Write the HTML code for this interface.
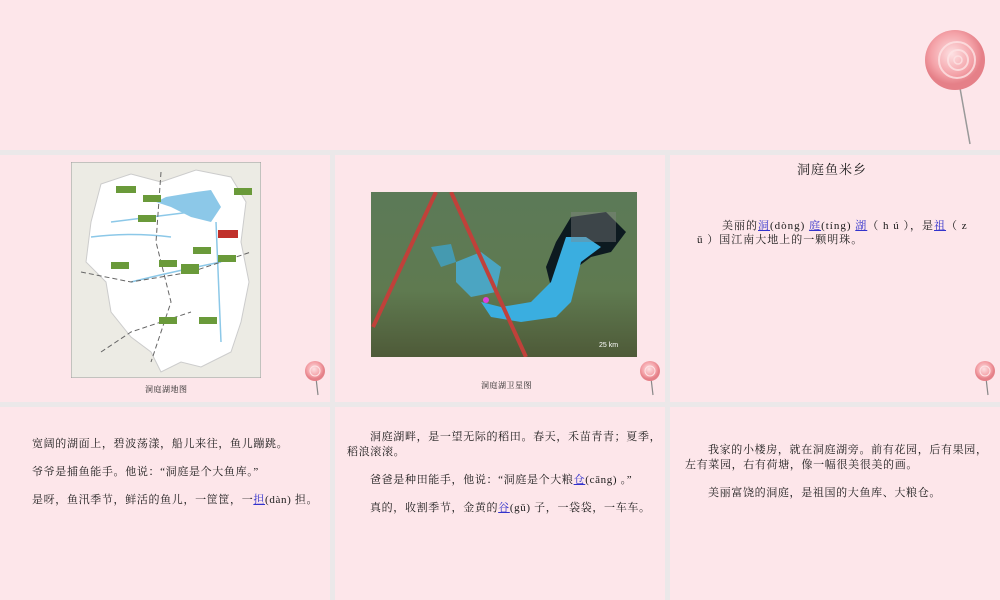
<!DOCTYPE html>
<html><head><meta charset="utf-8"><style>
*{margin:0;padding:0}
body{width:1000px;height:600px;background:#ebe8e9;position:relative;overflow:hidden;font-family:"Liberation Serif","Noto Serif CJK SC",serif;color:#1a1a1a}
.p{position:absolute;background:#fde6ea}
.t{position:absolute;white-space:nowrap;font-size:11px;letter-spacing:0.65px;line-height:14px}
a{color:#3333cc;text-decoration:underline}
.lp{position:absolute}
</style></head><body>
<div class="p" style="left:0;top:0;width:1000px;height:150px"></div>
<div class="p" style="left:0;top:155px;width:330px;height:247px"></div>
<div class="p" style="left:335px;top:155px;width:330px;height:247px"></div>
<div class="p" style="left:670px;top:155px;width:330px;height:247px"></div>
<div class="p" style="left:0;top:407px;width:330px;height:193px"></div>
<div class="p" style="left:335px;top:407px;width:330px;height:193px"></div>
<div class="p" style="left:670px;top:407px;width:330px;height:193px"></div>

<svg class="lp" style="left:915px;top:20px" width="80" height="130">
<defs><radialGradient id="g" cx="45%" cy="40%"><stop offset="0" stop-color="#fde0e2"/><stop offset="0.7" stop-color="#f4a2a8"/><stop offset="1" stop-color="#e58088"/></radialGradient></defs>
<line x1="45" y1="68" x2="55" y2="124" stroke="#999" stroke-width="1.5"/>
<circle cx="40" cy="40" r="30" fill="url(#g)"/>
<circle cx="42" cy="40" r="18" fill="none" stroke="#fde3e5" stroke-width="2" opacity=".8"/>
<circle cx="43" cy="40" r="10" fill="none" stroke="#fde3e5" stroke-width="2" opacity=".8"/>
<circle cx="43" cy="40" r="4" fill="none" stroke="#fde3e5" stroke-width="1.5" opacity=".8"/>
</svg>
<svg class="lp" style="left:304px;top:360px" width="24" height="36"><line x1="12" y1="18" x2="14" y2="35" stroke="#888" stroke-width="1.2"/><circle cx="11" cy="11" r="10" fill="url(#g)"/><circle cx="11" cy="11" r="5" fill="none" stroke="#fde3e5"/></svg>
<svg class="lp" style="left:639px;top:360px" width="24" height="36"><line x1="12" y1="18" x2="14" y2="35" stroke="#888" stroke-width="1.2"/><circle cx="11" cy="11" r="10" fill="url(#g)"/><circle cx="11" cy="11" r="5" fill="none" stroke="#fde3e5"/></svg>
<svg class="lp" style="left:974px;top:360px" width="24" height="36"><line x1="12" y1="18" x2="14" y2="35" stroke="#888" stroke-width="1.2"/><circle cx="11" cy="11" r="10" fill="url(#g)"/><circle cx="11" cy="11" r="5" fill="none" stroke="#fde3e5"/></svg>

<svg class="lp" style="left:71px;top:162px" width="190" height="216">
<rect x="0" y="0" width="190" height="216" fill="#ecebe4" stroke="#999" stroke-width="1"/>
<path d="M30 22 L60 12 L90 20 L125 8 L160 15 L175 40 L170 80 L178 120 L170 160 L160 190 L130 205 L110 200 L90 210 L80 190 L60 175 L40 150 L35 120 L15 100 L20 60 Z" fill="#fff" stroke="#ccc"/>
<path d="M125 30 L140 28 L150 45 L140 60 L120 55 L100 45 L85 40 L95 35 Z" fill="#8cc8e8"/>
<path d="M40 60 Q80 55 120 50 M20 75 Q60 70 100 75 M145 60 L150 180 M60 120 Q100 110 150 100" stroke="#8cc8e8" fill="none" stroke-width="1.5"/>
<path d="M10 110 L60 120 L120 110 L180 90 M90 10 L85 80 L100 140 L80 200 M30 190 L60 170 L120 150" stroke="#666" stroke-dasharray="5 3" fill="none"/>
<rect x="45" y="24" width="20" height="7" fill="#6a9a3a"/><rect x="72" y="33" width="18" height="7" fill="#6a9a3a"/>
<rect x="163" y="26" width="18" height="7" fill="#6a9a3a"/><rect x="67" y="53" width="18" height="7" fill="#6a9a3a"/>
<rect x="110" y="102" width="18" height="7" fill="#6a9a3a"/><rect x="147" y="68" width="20" height="8" fill="#c0302a"/>
<rect x="88" y="155" width="18" height="7" fill="#6a9a3a"/><rect x="110" y="105" width="18" height="7" fill="#6a9a3a"/>
<rect x="40" y="100" width="18" height="7" fill="#6a9a3a"/><rect x="147" y="93" width="18" height="7" fill="#6a9a3a"/>
<rect x="122" y="85" width="18" height="7" fill="#6a9a3a"/><rect x="88" y="98" width="18" height="7" fill="#6a9a3a"/>
<rect x="128" y="155" width="18" height="7" fill="#6a9a3a"/>
</svg>
<div class="t" style="left:145px;top:383px;font-size:8px;letter-spacing:0.5px">洞庭湖地图</div>

<svg class="lp" style="left:371px;top:192px" width="266" height="165">
<defs><linearGradient id="s" x1="0" y1="0" x2="0" y2="1"><stop offset="0" stop-color="#5c7a58"/><stop offset=".6" stop-color="#5f7a50"/><stop offset="1" stop-color="#4e5a38"/></linearGradient></defs>
<rect width="266" height="165" fill="url(#s)"/>
<path d="M200 25 L235 20 L255 40 L240 60 L220 65 L200 80 L180 95 L175 75 L185 50 Z" fill="#0d1a20"/>
<path d="M195 45 L215 45 L230 55 L210 70 L200 110 L185 125 L150 130 L120 125 L110 110 L130 115 L160 110 L180 90 L190 60 Z" fill="#3aaee0"/>
<path d="M85 70 L110 60 L130 75 L125 100 L100 105 L85 90 Z" fill="#46b0de" opacity=".8"/>
<path d="M60 55 L80 52 L85 70 L70 75 Z" fill="#3aa8d8" opacity=".7"/>
<rect x="200" y="20" width="45" height="30" fill="#888" opacity=".4"/>
<line x1="65" y1="0" x2="2" y2="135" stroke="#c0413a" stroke-width="4"/>
<line x1="80" y1="0" x2="155" y2="165" stroke="#c0413a" stroke-width="4"/>
<circle cx="115" cy="108" r="3" fill="#e040e0"/>
<text x="228" y="155" font-size="7" fill="#fff" font-family="Liberation Sans">25 km</text>
</svg>
<div class="t" style="left:481px;top:379px;font-size:8px;letter-spacing:0.5px">洞庭湖卫星图</div>

<div class="t" style="left:797px;top:163px;font-size:13px;letter-spacing:1px">洞庭鱼米乡</div>
<div class="t" style="left:722px;top:219px;letter-spacing:1px">美丽的<a>洞</a>(dòng) <a>庭</a>(tíng) <a>湖</a>（ h ú ），是<a>祖</a>（ z</div>
<div class="t" style="left:697px;top:233px;letter-spacing:1px">ū ）国江南大地上的一颗明珠。</div>

<div class="t" style="left:32px;top:437px">宽阔的湖面上，碧波荡漾，船儿来往，鱼儿蹦跳。</div>
<div class="t" style="left:32px;top:465px">爷爷是捕鱼能手。他说：“洞庭是个大鱼库。”</div>
<div class="t" style="left:32px;top:493px">是呀，鱼汛季节，鲜活的鱼儿，一筐筐，一<a>担</a>(dàn) 担。</div>

<div class="t" style="left:370px;top:430px">洞庭湖畔，是一望无际的稻田。春天，禾苗青青；夏季，</div>
<div class="t" style="left:347px;top:445px">稻浪滚滚。</div>
<div class="t" style="left:370px;top:473px">爸爸是种田能手，他说：“洞庭是个大粮<a>仓</a>(cāng) 。”</div>
<div class="t" style="left:370px;top:501px">真的，收割季节，金黄的<a>谷</a>(gǔ) 子，一袋袋，一车车。</div>

<div class="t" style="left:708px;top:443px">我家的小楼房，就在洞庭湖旁。前有花园，后有果园，</div>
<div class="t" style="left:685px;top:458px">左有菜园，右有荷塘，像一幅很美很美的画。</div>
<div class="t" style="left:708px;top:486px">美丽富饶的洞庭，是祖国的大鱼库、大粮仓。</div>
</body></html>
